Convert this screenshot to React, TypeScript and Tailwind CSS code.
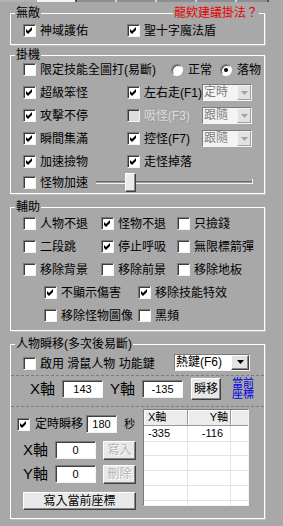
import React from "react";

const sunken =
  "border border-t-[#7a7a7a] border-l-[#7a7a7a] border-b-[#f4f4f4] border-r-[#f4f4f4]";
const raised =
  "border border-t-white border-l-white border-b-[#404040] border-r-[#404040] shadow-[inset_-1px_-1px_0_#8a8a8a]";

function Box({ checked = false, disabled = false }: { checked?: boolean; disabled?: boolean }) {
  return (
    <span
      className={`flex h-[13px] w-[13px] shrink-0 items-center justify-center border border-t-[#7a7a7a] border-l-[#7a7a7a] border-b-[#f2f2f2] border-r-[#f2f2f2] shadow-[inset_1px_1px_0_#3c3c3c] ${
        disabled ? "bg-[#dedede]" : "bg-white"
      }`}
    >
      {checked && (
        <svg width="7" height="7" viewBox="0 0 7 7" className="block">
          <path d="M0 2 L2 4 L6 0 L6 3 L2 7 L0 5 Z" fill="#000" />
        </svg>
      )}
    </span>
  );
}

function CB({
  label,
  checked = false,
  disabled = false,
  w = "",
  className = "",
}: {
  label: string;
  checked?: boolean;
  disabled?: boolean;
  w?: string;
  className?: string;
}) {
  return (
    <div className={`flex shrink-0 items-center gap-[4px] ${w} ${className}`}>
      <Box checked={checked} disabled={disabled} />
      <span
        className={`whitespace-nowrap text-[12px] leading-[14px] ${
          disabled ? "text-[#dcdcdc] [text-shadow:1px_1px_0_#9a9a9a]" : "text-black"
        }`}
      >
        {label}
      </span>
    </div>
  );
}

function Radio({ label, selected = false, w = "" }: { label: string; selected?: boolean; w?: string }) {
  return (
    <div className={`flex shrink-0 items-center gap-[5px] ${w}`}>
      <span className="flex h-[12px] w-[12px] items-center justify-center rounded-full border border-t-[#7a7a7a] border-l-[#7a7a7a] border-b-white border-r-white bg-white shadow-[inset_1px_1px_0_#505050]">
        {selected && <span className="h-[4px] w-[4px] rounded-full bg-black" />}
      </span>
      <span className="whitespace-nowrap text-[12px] leading-[14px]">{label}</span>
    </div>
  );
}

function Arrow({ color }: { color: string }) {
  return (
    <svg width="7" height="4" viewBox="0 0 7 4" className="block">
      <path d="M0 0 H7 L3.5 4 Z" fill={color} />
    </svg>
  );
}

function Combo({
  text,
  disabled = false,
  w,
  btn,
}: {
  text: string;
  disabled?: boolean;
  w: string;
  btn: string;
}) {
  return (
    <div
      className={`flex h-[17px] shrink-0 ${w} ${sunken} ${disabled ? "bg-[#f4f4f4]" : "bg-white"}`}
    >
      <span
        className={`flex-1 whitespace-nowrap pl-[1px] text-[12px] leading-[15px] ${
          disabled ? "text-[#7c7c7c]" : "text-black"
        }`}
      >
        {text}
      </span>
      <span
        className={`flex h-[15px] items-center justify-center bg-[#e2e2e2] ${btn} ${
          disabled
            ? "border border-t-[#f4f4f4] border-l-[#f4f4f4] border-b-[#a0a0a0] border-r-[#a0a0a0]"
            : raised
        }`}
      >
        <Arrow color={disabled ? "#a4a4a4" : "#000"} />
      </span>
    </div>
  );
}

function Input({ text, w, h }: { text: string; w: string; h: string }) {
  return (
    <div
      className={`flex shrink-0 items-center justify-center bg-white text-[11px] leading-[13px] ${w} ${h} ${sunken} shadow-[inset_1px_1px_0_#404040]`}
    >
      {text}
    </div>
  );
}

function Btn({
  text,
  disabled = false,
  className,
}: {
  text: string;
  disabled?: boolean;
  className: string;
}) {
  return (
    <div
      className={`flex shrink-0 items-center justify-center bg-[#e8e8e8] text-[12px] leading-[14px] ${raised} ${className} ${
        disabled ? "text-[#b4b4b4] [text-shadow:1px_1px_0_#ffffff]" : "text-black"
      }`}
    >
      {text}
    </div>
  );
}

function Group({
  label,
  right,
  className,
  children,
}: {
  label: string;
  right?: React.ReactNode;
  className: string;
  children: React.ReactNode;
}) {
  return (
    <div className={`relative border border-white shadow-[1px_1px_0_#bcbcbc] ${className}`}>
      <span className="absolute left-[4px] top-[-8px] bg-[#a8a8a8] px-[1px] text-[12px] leading-[14px] whitespace-nowrap">
        {label}
      </span>
      {right}
      {children}
    </div>
  );
}

function TrackLine({ w }: { w: string }) {
  return (
    <div className={`h-[3px] shrink-0 border-t border-b border-t-[#6a6a6a] border-b-[#f4f4f4] bg-[#9a9a9a] ${w}`} />
  );
}

export default function App() {
  const rows = [0, 1, 2, 3, 4, 5];
  return (
    <div className="h-[526px] w-[283px] overflow-hidden bg-[#a8a8a8] font-['Liberation_Sans','Noto_Sans_CJK_TC',sans-serif] text-black">
      {/* tab strip bottom */}
      <div className="flex h-[2px]">
        <div className="w-[37px] bg-[#b2b2b2]" />
        <div className="w-[38px] bg-[#f4f4f4]" />
        <div className="w-[2px] bg-[#505050]" />
        <div className="w-[38px] bg-[#8e8e8e]" />
        <div className="w-[2px] bg-[#d0d0d0]" />
        <div className="w-[38px] bg-[#8e8e8e]" />
        <div className="w-[2px] bg-[#d0d0d0]" />
        <div className="w-[38px] bg-[#8e8e8e]" />
        <div className="w-[2px] bg-[#d0d0d0]" />
        <div className="w-[38px] bg-[#8e8e8e]" />
        <div className="w-[2px] bg-[#d0d0d0]" />
        <div className="w-[30px] bg-[#8e8e8e]" />
        <div className="w-[2px] bg-[#505050]" />
      </div>

      <div className="ml-[10px] w-[255px]">
        {/* 無敵 */}
        <Group
          label="無敵"
          className="mt-[11px] h-[32px]"
          right={
            <span className="absolute right-[5px] top-[-8px] bg-[#a8a8a8] px-[1px] text-[12px] leading-[14px] text-[#e60000] whitespace-nowrap">
              龍欸建議掛法？
            </span>
          }
        >
          <div className="mt-[8px] flex h-[17px] items-center pl-[12px]">
            <CB label="神域護佑" checked w="w-[104px]" />
            <CB label="聖十字魔法盾" checked />
          </div>
        </Group>

        {/* 掛機 */}
        <Group label="掛機" className="mt-[10px] h-[139px]">
          <div className="flex flex-col pl-[12px] pt-[2px]">
            <div className="flex h-[23px] items-center">
              <CB label="限定技能全圖打(易斷)" w="w-[148px]" />
              <Radio label="正常" w="w-[49px]" />
              <Radio label="落物" selected />
            </div>
            <div className="flex h-[23px] items-center">
              <CB label="超級笨怪" checked w="w-[104px]" />
              <CB label="左右走(F1)" checked w="w-[75px]" />
              <Combo text="定時" disabled w="w-[50px]" btn="w-[14px]" />
            </div>
            <div className="flex h-[23px] items-center">
              <CB label="攻擊不停" checked w="w-[104px]" />
              <CB label="吸怪(F3)" disabled w="w-[75px]" />
              <Combo text="跟隨" disabled w="w-[50px]" btn="w-[14px]" />
            </div>
            <div className="flex h-[23px] items-center">
              <CB label="瞬間集滿" checked w="w-[104px]" />
              <CB label="控怪(F7)" checked w="w-[75px]" />
              <Combo text="跟隨" disabled w="w-[50px]" btn="w-[14px]" />
            </div>
            <div className="flex h-[23px] items-center">
              <CB label="加速撿物" checked w="w-[104px]" />
              <CB label="走怪掉落" checked />
            </div>
            <div className="flex h-[19px] items-center">
              <CB label="怪物加速" w="w-[73px]" />
              <div className="flex h-[19px] w-[157px] items-center">
                <TrackLine w="w-[29px]" />
                <div className={`h-[19px] w-[11px] shrink-0 bg-[#ececec] ${raised}`} />
                <TrackLine w="w-[116px]" />
                <div className="mt-[-3px] h-[5px] w-[1px] shrink-0 bg-[#f4f4f4]" />
              </div>
            </div>
          </div>
        </Group>

        {/* 輔助 */}
        <Group label="輔助" className="mt-[13px] h-[124px]">
          <div className="flex flex-col pl-[12px] pt-[4px]">
            <div className="flex h-[23px] items-center">
              <CB label="人物不退" w="w-[78px]" />
              <CB label="怪物不退" checked w="w-[76px]" />
              <CB label="只撿錢" />
            </div>
            <div className="flex h-[23px] items-center">
              <CB label="二段跳" w="w-[78px]" />
              <CB label="停止呼吸" checked w="w-[76px]" />
              <CB label="無限標箭彈" />
            </div>
            <div className="flex h-[23px] items-center">
              <CB label="移除背景" w="w-[78px]" />
              <CB label="移除前景" w="w-[76px]" />
              <CB label="移除地板" />
            </div>
            <div className="flex h-[23px] items-center pl-[21px]">
              <CB label="不顯示傷害" checked w="w-[94px]" />
              <CB label="移除技能特效" checked />
            </div>
            <div className="flex h-[23px] items-center pl-[21px]">
              <CB label="移除怪物圖像" w="w-[94px]" />
              <CB label="黑頻" />
            </div>
          </div>
        </Group>

        {/* 人物瞬移 */}
        <Group label="人物瞬移(多次後易斷)" className="mt-[13px] h-[175px]">
          <div className="flex flex-col">
            <div className="mt-[8px] flex h-[18px] items-center pl-[12px]">
              <CB label="啟用 滑鼠人物 功能鍵" w="w-[151px]" className="mt-[3px]" />
              <Combo text="熱鍵(F6)" w="w-[76px]" btn="w-[18px]" />
            </div>
            <div className="mt-[4px] border-t border-dashed border-[#7c7c7c]" />
            <div className="mt-[2px] flex h-[22px] items-center pl-[19px]">
              <span className="w-[32px] text-[15px] leading-[18px]">X軸</span>
              <Input text="143" w="w-[41px]" h="h-[18px]" />
              <span className="ml-[7px] w-[32px] text-[15px] leading-[18px]">Y軸</span>
              <Input text="-135" w="w-[41px]" h="h-[18px]" />
              <Btn text="瞬移" className="ml-[8px] h-[22px] w-[30px]" />
              <span className="ml-[11px] text-[11px] leading-[11px] text-[#0000e6]">
                當前
                <br />
                座標
              </span>
            </div>
            <div className="mt-[6px] border-t border-dashed border-[#7c7c7c]" />
            <div className="flex">
              <div className="flex w-[132px] flex-col pt-[8px]">
                <div className="flex h-[18px] items-center pl-[6px]">
                  <Box checked />
                  <span className="ml-[5px] text-[12px] leading-[14px]">定時瞬移</span>
                  <Input text="180" w="w-[31px]" h="h-[18px] ml-[3px]" />
                  <span className="ml-[7px] text-[11px] leading-[14px]">秒</span>
                </div>
                <div className="mt-[8px] flex h-[18px] items-center pl-[12px]">
                  <span className="w-[32px] text-[15px] leading-[18px]">X軸</span>
                  <Input text="0" w="w-[41px]" h="h-[18px]" />
                  <Btn text="寫入" disabled className="ml-[7px] h-[19px] w-[33px]" />
                </div>
                <div className="mt-[6px] flex h-[18px] items-center pl-[12px]">
                  <span className="w-[32px] text-[15px] leading-[18px]">Y軸</span>
                  <Input text="0" w="w-[41px]" h="h-[18px]" />
                  <Btn text="刪除" disabled className="ml-[7px] h-[19px] w-[33px]" />
                </div>
                <Btn text="寫入當前座標" className="ml-[12px] mt-[9px] h-[18px] w-[113px]" />
              </div>
              <div className={`mt-[2px] h-[97px] w-[106px] overflow-hidden bg-white ${sunken}`}>
                <div className="grid h-[16px] grid-cols-[44px_43px_1fr]">
                  <div className="border-r border-b border-r-[#9a9a9a] border-b-[#9a9a9a] bg-[#ececec] pl-[4px] text-[11px] leading-[15px] shadow-[inset_1px_1px_0_#ffffff]">
                    X軸
                  </div>
                  <div className="border-r border-b border-r-[#9a9a9a] border-b-[#9a9a9a] bg-[#ececec] pr-[2px] text-right text-[11px] leading-[15px] shadow-[inset_1px_1px_0_#ffffff]">
                    Y軸
                  </div>
                  <div className="border-b border-b-[#9a9a9a] bg-[#ececec] shadow-[inset_1px_1px_0_#ffffff]" />
                </div>
                {rows.map((i) => (
                  <div key={i} className="grid h-[15px] grid-cols-[44px_43px_1fr]">
                    <div className="border-r border-b border-[#e4e4e4] pl-[4px] text-[11px] leading-[15px]">
                      {i === 0 ? "-335" : ""}
                    </div>
                    <div className="border-r border-b border-[#e4e4e4] pr-[7px] text-right text-[11px] leading-[15px]">
                      {i === 0 ? "-116" : ""}
                    </div>
                    <div className="border-b border-[#e4e4e4]" />
                  </div>
                ))}
              </div>
            </div>
          </div>
        </Group>
      </div>
    </div>
  );
}
